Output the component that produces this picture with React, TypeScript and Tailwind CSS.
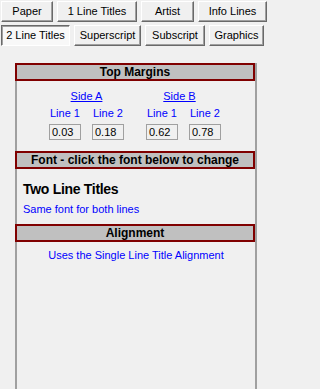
import React from 'react';

const row1 = [
  { label: 'Paper', w: 'w-[52px]' },
  { label: '1 Line Titles', w: 'w-[80px]' },
  { label: 'Artist', w: 'w-[53px]' },
  { label: 'Info Lines', w: 'w-[69px]' },
];

const row2 = [
  { label: '2 Line Titles', w: 'w-[69px]', active: true },
  { label: 'Superscript', w: 'w-[67px]' },
  { label: 'Subscript', w: 'w-[60px]' },
  { label: 'Graphics', w: 'w-[55px]' },
];

function TabButton({ label, w, active }: { label: string; w: string; active?: boolean }) {
  return (
    <button
      className={
        w +
        ' h-[21px] text-[11px] leading-none text-black border ' +
        (active
          ? 'bg-[#f8f8f8] border-t-[#696969] border-l-[#696969] border-b-white border-r-white shadow-[inset_1px_1px_0_#a0a0a0]'
          : 'bg-[#f0f0f0] border-t-white border-l-white border-b-[#696969] border-r-[#696969] shadow-[inset_-1px_-1px_0_#a0a0a0]')
      }
    >
      {label}
    </button>
  );
}

function Header({ children }: { children: React.ReactNode }) {
  return (
    <div className="-ml-[2px] w-[240px] h-[18px] border-2 border-[#800000] bg-[#c0c0c0] flex items-center justify-center text-[12px] font-bold text-black leading-none">
      {children}
    </div>
  );
}

function ValueBox({ value }: { value: string }) {
  return (
    <div className="w-[32px] h-[16px] border border-[#a0a0a0] bg-[#f0f0f0] px-[2px] text-[11px] leading-[14px] text-black">
      {value}
    </div>
  );
}

function Side({ name, a, b, shift }: { name: string; a: string; b: string; shift?: string }) {
  return (
    <div className="w-[75px] flex flex-col">
      <div className={'h-[13px] text-center text-[11px] leading-[13px] text-[#0000ff] ' + (shift ?? '')}>
        <span className="underline">{name}</span>
      </div>
      <div className="mt-[4px] flex justify-between text-[11px] leading-[13px] text-[#0000ff]">
        <span className="w-[32px] text-center">Line 1</span>
        <span className="w-[32px] text-center">Line 2</span>
      </div>
      <div className="mt-[4px] flex justify-between">
        <ValueBox value={a} />
        <ValueBox value={b} />
      </div>
    </div>
  );
}

export default function App() {
  return (
    <div
      className="w-full min-w-[270px] h-[389px] bg-[#f0f0f0] flex flex-col overflow-hidden"
      style={{ fontFamily: '"Liberation Sans", Arial, sans-serif' }}
    >
      <div className="pt-[1px] pl-[1px] flex flex-col gap-[3px]">
        <div className="flex gap-[4px]">
          {row1.map((b) => (
            <TabButton key={b.label} {...b} />
          ))}
        </div>
        <div className="flex gap-[4px]">
          {row2.map((b) => (
            <TabButton key={b.label} {...b} />
          ))}
        </div>
      </div>

      <div className="mt-[17px] ml-[15px] w-[242px] flex-1 border-x-2 border-[#a0a0a0] flex flex-col">
        <Header>Top Margins</Header>

        <div className="mt-[9px] pl-[32px] flex gap-[22px]">
          <Side name="Side A" a="0.03" b="0.18" />
          <Side name="Side B" a="0.62" b="0.78" shift="pr-[8px]" />
        </div>

        <div className="mt-[11px]">
          <Header>Font - click the font below to change</Header>
        </div>

        <div className="mt-[12px] pl-[6px] text-[14px] font-bold leading-[16px] text-black tracking-[-0.3px]">
          Two Line Titles
        </div>
        <div className="mt-[6px] pl-[6px] text-[11px] leading-[13px] text-[#0000ff]">
          Same font for both lines
        </div>

        <div className="mt-[8px]">
          <Header>Alignment</Header>
        </div>
        <div className="mt-[7px] text-center text-[11px] leading-[13px] text-[#0000ff]">
          Uses the Single Line Title Alignment
        </div>
      </div>
    </div>
  );
}
